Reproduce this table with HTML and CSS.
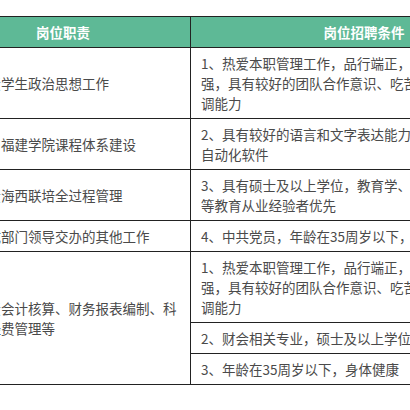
FILE: index.html
```html
<!DOCTYPE html>
<html lang="zh-CN">
<head>
<meta charset="utf-8">
<title>岗位职责与招聘条件</title>
<link rel="stylesheet" href="styles.css">
</head>
<body>
<table class="jobs">
  <thead>
    <tr>
      <th class="h-duty">岗位职责</th>
      <th class="h-req">岗位招聘条件</th>
    </tr>
  </thead>
  <tbody>
    <tr>
      <td class="duty">负责学生政治思想工作</td>
      <td class="req">1、热爱本职管理工作，品行端正，责任心和事业心<br>强，具有较好的团队合作意识、吃苦耐劳精神和组织协<br>调能力</td>
    </tr>
    <tr>
      <td class="duty">参与福建学院课程体系建设</td>
      <td class="req">2、具有较好的语言和文字表达能力，熟练使用办公<br>自动化软件</td>
    </tr>
    <tr>
      <td class="duty">负责海西联培全过程管理</td>
      <td class="req">3、具有硕士及以上学位，教育学、管理学专业或有高<br>等教育从业经验者优先</td>
    </tr>
    <tr>
      <td class="duty">完成部门领导交办的其他工作</td>
      <td class="req">4、中共党员，年龄在35周岁以下，身体健康</td>
    </tr>
    <tr>
      <td class="duty" rowspan="3">负责会计核算、财务报表编制、科研经费管理等</td>
      <td class="req">1、热爱本职管理工作，品行端正，责任心和事业心<br>强，具有较好的团队合作意识、吃苦耐劳精神和组织协<br>调能力</td>
    </tr>
    <tr>
      <td class="req">2、财会相关专业，硕士及以上学位，中共党员优先</td>
    </tr>
    <tr>
      <td class="req">3、年龄在35周岁以下，身体健康</td>
    </tr>
  </tbody>
</table>
</body>
</html>
```

FILE: styles.css
```css
html, body {
  margin: 0;
  padding: 0;
  background: #ffffff;
  overflow: hidden;
}

body {
  font-family: "Noto Sans CJK SC", "Microsoft YaHei", sans-serif;
  font-size: 13.5px;
  line-height: 20px;
  color: #4a4a4a;
}

.jobs {
  table-layout: fixed;
  width: 603px;
  margin: 16px 0 0 -65px;
  border-collapse: separate;
  border-spacing: 0;
  border-top: 1px solid #222222;
  border-left: 1px solid #222222;
}

.jobs th,
.jobs td {
  box-sizing: border-box;
  border-right: 1px solid #222222;
  border-bottom: 1px solid #222222;
  padding: 5px 10px;
}

.jobs th {
  background: #5eb996;
  color: #ffffff;
  font-weight: bold;
  text-align: center;
}

.jobs .h-duty {
  width: 255px;
}

.jobs .h-req {
  width: 347px;
}

.jobs .duty {
  padding-left: 38px;
  padding-right: 10px;
  text-align: left;
  vertical-align: middle;
}

.jobs .req {
  white-space: nowrap;
  overflow: hidden;
  vertical-align: middle;
}
```
